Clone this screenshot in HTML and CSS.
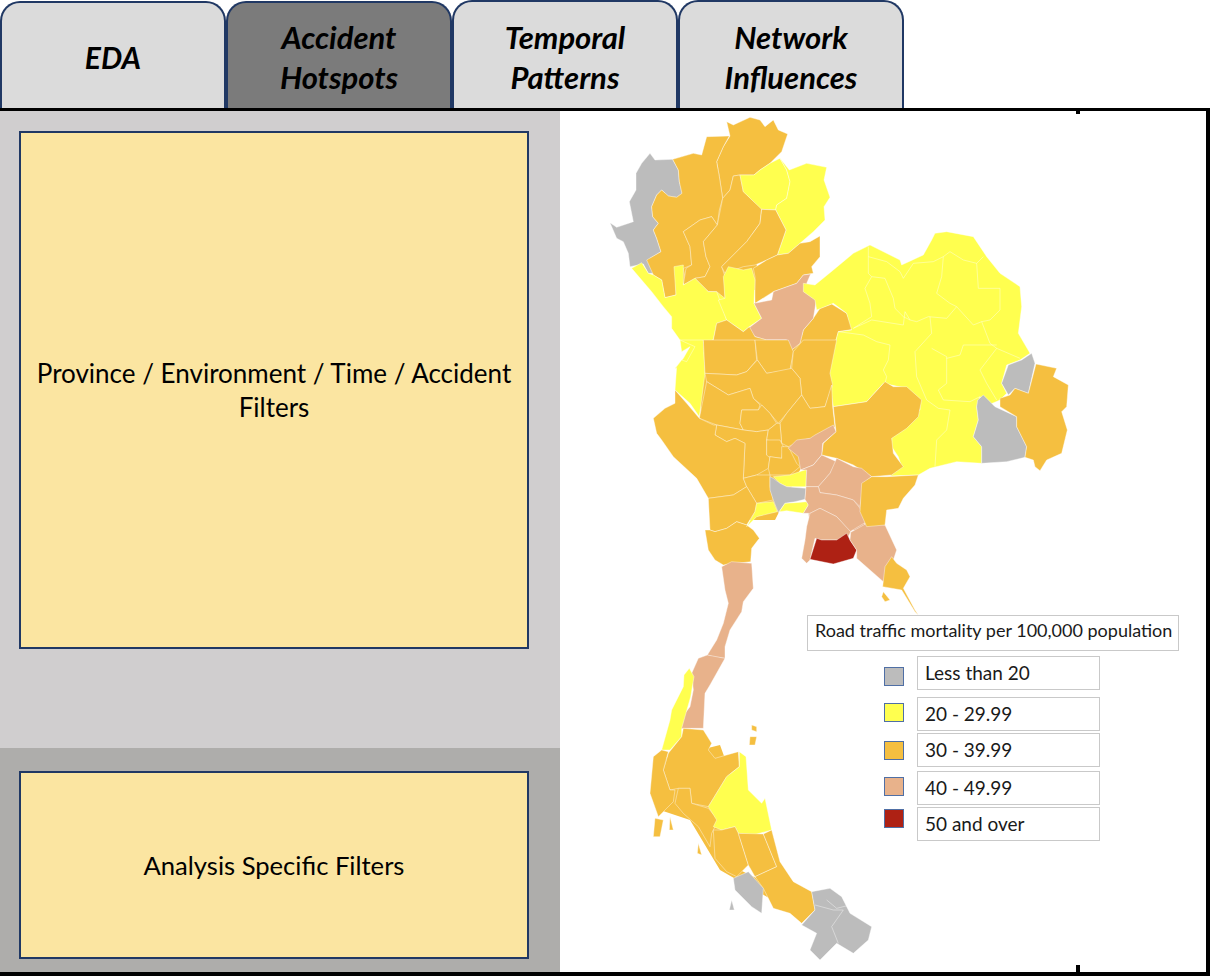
FILE: index.html
```html
<!DOCTYPE html>
<html lang="en">
<head>
  <meta charset="UTF-8" />
  <title>Accident Hotspots</title>
  <link rel="stylesheet" href="styles.css">
</head>
<body>

  <nav class="tabs">
    <div class="tab low eda">EDA</div>
    <div class="tab low active">Accident<br>Hotspots</div>
    <div class="tab">Temporal<br>Patterns</div>
    <div class="tab">Network<br>Influences</div>
  </nav>

  <main class="board">
    <section class="side">
      <div class="side-top">
        <div class="filter-box big">Province / Environment / Time / Accident Filters</div>
      </div>
      <div class="side-bottom">
        <div class="filter-box small">Analysis Specific Filters</div>
      </div>
    </section>

    <section class="map">
      <span class="tick tick-top"></span>
      <span class="tick tick-bottom"></span>

      <svg class="map-svg" width="646" height="861" viewBox="560 111 646 861">
        <!-- backing so no white shows between provinces -->
        <g class="backing">
          <polygon class="orange" points="665,190 740,160 748,200 760,290 690,290 665,250"/>
          <polygon class="yellow" points="680,300 740,285 745,320 700,335"/>
          <polygon class="orange" points="705,340 835,335 830,430 800,470 775,520 715,520 705,480 700,400"/>
          <polygon class="tan" points="805,470 860,470 865,530 810,530"/>
          <polygon class="orange" points="660,760 720,745 740,800 740,870 800,900 790,910 720,870 690,820 660,810"/>
        </g>

        <!-- north -->
        <g transform="translate(600 110) scale(.33333)">
          <polygon class="grey" points="150,130 165,150 218,148 235,180 238,215 246,250 230,262 205,258 185,240 170,255 155,290 158,320 175,340 160,360 170,385 183,425 150,445 160,490 145,490 130,462 90,470 85,430 70,395 50,385 30,338 50,352 100,335 88,275 108,240 108,190 125,160"/>
          <polygon class="orange" points="380,35 400,45 450,22 480,30 495,50 520,30 535,60 563,72 545,125 510,160 480,180 462,195 420,195 400,198 390,240 368,265 358,200 350,155 370,110 390,78"/>
          <polygon class="orange" points="218,148 280,130 305,135 320,80 388,78 370,110 350,155 358,200 368,265 358,300 352,345 335,320 300,330 250,365 270,410 275,465 250,475 258,520 228,520 228,555 195,563 185,510 160,495 140,450 183,425 170,385 160,360 175,340 158,320 155,290 170,255 185,240 205,258 230,262 246,250 238,215 235,180"/>
          <polygon class="orange" points="250,365 300,330 335,320 352,345 310,395 318,440 330,470 315,500 285,505 250,525 258,475 275,465 270,410"/>
          <polygon class="orange" points="400,198 420,195 430,245 485,295 480,340 440,395 365,470 375,500 375,565 350,545 325,545 285,505 315,500 330,470 318,440 310,395 352,345 368,265 390,240"/>
          <polygon class="yellow" points="420,195 462,195 480,180 510,160 540,145 560,180 570,215 560,265 530,285 527,300 485,298 430,245"/>
          <polygon class="yellow" points="540,145 568,180 620,160 680,172 672,210 690,262 672,290 675,330 640,365 600,400 565,430 532,435 558,360 527,300 530,285 560,265 570,215 560,180"/>
          <polygon class="orange" points="485,298 527,300 558,360 532,435 500,450 465,465 430,470 375,490 365,470 440,395 480,340"/>
          <polygon class="orange" points="660,378 660,440 635,470 640,490 610,495 590,520 520,545 465,580 465,500 460,475 500,450 532,435 565,430 600,400 630,395"/>
          <polygon class="yellow" points="95,475 125,458 145,490 160,495 185,510 195,563 228,555 222,470 250,465 250,525 285,505 325,545 350,545 370,600 380,630 350,640 340,690 305,700 310,780 225,775 250,745 270,710 245,725 240,690 215,655 215,620 190,590 155,545"/>
          <polygon class="yellow" points="385,470 430,480 455,475 465,510 462,580 485,625 448,650 430,665 380,630 355,570 375,565 370,500"/>
          <polygon class="orange" points="640,625 660,595 695,582 740,610 760,658 715,665 685,780 570,780 575,720 600,700 610,660"/>
          <polygon class="tan" points="610,495 632,492 620,520 650,565 640,625 610,660 600,700 575,720 560,690 500,690 465,680 445,655 485,625 462,580 515,570 520,545 590,520"/>
          <polygon class="orange" points="305,700 340,690 350,640 380,630 430,665 448,650 465,680 500,690 560,690 575,720 570,780 315,780"/>
        </g>

        <!-- north east -->
        <g transform="translate(800 220) scale(.33333)">
          <polygon class="yellow" points="10,190 45,195 100,150 160,100 210,75 300,120 305,135 370,105 395,60 405,40 440,35 520,50 560,110 600,160 660,200 665,260 655,340 690,400 660,420 620,435 605,490 620,520 600,540 565,555 540,530 530,560 535,600 520,650 545,680 545,730 470,725 390,745 355,765 270,768 305,740 295,710 275,680 275,650 300,630 330,595 360,570 360,540 320,505 250,490 200,545 100,560 88,480 85,440 115,335 155,330 140,280 100,250 50,270 45,240 10,215"/>
          <polyline class="line" points="205,80 205,160 215,170 195,205 210,250 215,290 160,325"/>
          <polyline class="line" points="205,110 260,125 300,155 310,175 340,130 400,125 430,110 450,95 490,120 530,130 550,110"/>
          <polyline class="line" points="215,170 255,175 280,235 285,265 310,290 330,300 350,305 385,290 440,295 470,260 520,315 545,305 570,370 590,385 540,450 560,490 590,540"/>
          <polyline class="line" points="430,110 425,170 410,220 450,250 470,260"/>
          <polyline class="line" points="530,130 535,205 600,205 600,270 570,300 545,305"/>
          <polyline class="line" points="160,325 215,300 310,315 315,275 330,300"/>
          <polyline class="line" points="115,335 190,345 230,365 270,375 265,420 250,450 260,470 255,490"/>
          <polyline class="line" points="390,290 395,340 345,395 350,470 380,540 415,565 450,570 440,630 410,660 405,740"/>
          <polyline class="line" points="395,385 440,410 440,490 415,510 430,540 510,545 540,530"/>
          <polyline class="line" points="440,415 480,405 490,375 590,375"/>
          <polyline class="line" points="590,385 660,415"/>
          <polygon class="grey" points="695,400 705,430 685,520 645,505 625,525 605,490 625,435 665,420"/>
          <polygon class="grey" points="550,525 585,560 650,590 650,620 680,680 675,712 620,725 545,730 545,680 520,650 535,600 530,560 533,540"/>
          <polygon class="orange" points="708,432 770,445 760,470 805,495 800,560 785,575 802,630 785,700 740,720 720,752 705,740 700,720 675,712 680,680 650,620 650,590 600,560 600,535 630,525 645,505 685,520"/>
        </g>

        <!-- centre and east coast -->
        <g transform="translate(640 340) scale(.33333)">
          <polygon class="yellow" points="120,0 190,0 195,100 178,230 150,190 105,150 110,80 125,60 140,65 165,20"/>
          <polygon class="orange" points="190,0 345,0 350,60 320,95 290,105 195,100"/>
          <polygon class="orange" points="345,0 445,0 460,35 450,90 380,100 352,60"/>
          <polygon class="orange" points="460,35 490,0 590,0 570,100 578,135 555,200 510,205 485,165 480,115 455,85"/>
          <polygon class="orange" points="195,100 290,105 320,95 352,60 380,100 455,85 480,115 485,165 440,220 415,250 390,220 365,195 340,175 330,145 265,165 200,125"/>
          <polygon class="orange" points="200,125 265,165 330,145 340,175 360,195 355,210 305,210 300,250 310,270 230,255 178,235"/>
          <polygon class="orange" points="305,210 355,210 365,195 390,220 410,250 385,270 350,275 310,270 300,250"/>
          <polygon class="orange" points="485,165 510,205 555,200 575,135 578,200 585,260 545,290 525,300 510,295 490,300 445,320 425,310 420,250 440,220"/>
          <polygon class="orange" points="230,255 310,270 350,275 385,270 380,300 380,345 390,350 385,385 350,405 310,415 315,310 285,295 260,305 225,285"/>
          <polygon class="orange" points="40,235 75,205 105,190 105,150 140,190 178,235 220,255 230,255 225,285 260,305 285,295 315,310 310,415 320,440 280,465 205,475 170,415 100,350 65,300 50,280"/>
          <polygon class="orange" points="385,270 410,250 420,250 425,310 380,300"/>
          <polygon class="orange" points="380,300 420,300 430,320 425,355 385,350 380,345"/>
          <polygon class="orange" points="425,320 445,320 470,370 480,380 450,405 390,405 385,385 390,350 425,355"/>
          <polygon class="orange" points="310,415 350,405 390,405 390,440 400,480 350,490 320,440"/>
          <polygon class="orange" points="205,475 280,465 320,440 350,490 345,515 320,555 290,545 260,565 225,575 210,570"/>
          <polygon class="orange" points="195,570 210,570 225,575 260,565 290,545 320,555 340,570 358,595 335,625 332,665 250,675 225,660 205,630"/>
          <polygon class="orange" points="580,200 680,185 735,125 760,140 800,140 845,180 835,230 800,265 755,295 760,340 790,380 755,405 695,410 640,375 590,355 545,345 550,310 588,275"/>
          <polygon class="tan" points="580,255 588,275 548,310 545,345 520,375 482,390 475,350 445,325 470,300 510,295 525,285"/>
          <polygon class="yellow" points="400,410 450,405 500,388 498,440 440,440 420,430"/>
          <polygon class="grey" points="390,410 400,415 420,430 440,440 498,445 495,478 465,485 435,490 415,518 400,480 390,450"/>
          <polygon class="yellow" points="320,560 345,515 350,490 400,485 412,515 350,530"/>
          <polygon class="yellow" points="418,515 435,490 465,488 500,485 505,495 490,520 440,512"/>
          <polygon class="tan" points="482,390 520,375 545,345 590,365 570,400 535,440 498,440 500,390"/>
          <polygon class="tan" points="590,355 640,380 665,385 695,410 670,430 660,500 640,480 590,465 540,458 535,440 570,400"/>
          <polygon class="tan" points="498,440 535,440 540,458 590,465 640,480 660,505 680,545 630,575 590,530 540,505 510,520 490,520 505,495 495,478"/>
          <polygon class="tan" points="510,520 540,505 590,530 632,575 620,600 545,600 525,595 510,660 500,670 485,655 495,600 500,560"/>
          <polygon class="red" points="530,595 545,600 590,600 620,580 630,600 650,630 640,655 580,672 510,658"/>
          <polygon class="tan" points="632,577 680,550 735,555 770,630 755,675 730,725 690,690 650,655 650,630 630,600"/>
          <polygon class="orange" points="755,650 770,670 800,690 810,710 790,745 825,810 835,825 825,815 785,750 728,740 735,680"/>
          <polygon class="orange" points="730,755 750,780 735,785 725,770"/>
          <polygon class="orange" points="665,430 695,410 740,410 835,405 825,435 790,475 775,505 740,510 735,555 680,560 660,515"/>
        </g>

        <!-- south -->
        <g transform="translate(620 560) scale(.33333)">
          <polygon class="tan" points="305,20 335,5 395,10 400,85 370,125 365,155 330,210 315,260 315,295 280,290 262,285 290,240 310,190 325,130 315,90"/>
          <polygon class="tan" points="262,285 315,295 270,375 255,400 250,505 190,505 175,510 168,495 210,440 220,390 215,340 235,295"/>
          <polygon class="yellow" points="208,325 222,350 212,410 185,505 185,530 150,570 125,570 150,480 155,450 190,380 192,345"/>
          <polygon class="orange" points="190,505 250,510 275,550 265,570 285,595 355,575 358,620 320,650 265,740 215,730 210,685 175,685 150,690 130,630 145,580 185,530"/>
          <polygon class="orange" points="125,570 145,575 130,630 150,690 165,690 160,725 115,770 90,700 100,590"/>
          <polygon class="orange" points="105,775 130,780 120,830 100,830"/>
          <polygon class="orange" points="175,685 210,685 215,730 265,745 295,780 275,820 270,860 235,800 190,760 165,730"/>
          <polygon class="yellow" points="358,575 378,590 385,690 425,730 435,715 455,810 400,825 355,820 345,800 305,810 280,800 290,780 265,740 320,650 358,620"/>
          <polygon class="orange" points="280,810 305,810 345,800 355,820 385,915 350,950 320,935 285,895"/>
          <polygon class="orange" points="355,820 430,822 470,920 405,950 385,915"/>
          <polygon class="orange" points="430,822 455,810 480,905 520,965 575,995 585,1050 545,1090 510,1060 460,1045 430,985 405,950 470,920"/>
          <polygon class="grey" points="340,955 385,935 430,985 425,1060 395,1040 345,990"/>
          <polygon class="grey" points="575,995 630,985 665,1010 690,1060 755,1100 745,1140 700,1180 650,1150 600,1200 570,1170 590,1120 545,1095 585,1050"/>
          <polyline class="line" points="620,1020 650,1045 690,1035"/>
          <polyline class="line" points="585,1035 640,1050 670,1050 635,1100 655,1150"/>
          <polygon class="orange" points="395,495 410,500 410,515 395,510"/>
          <polygon class="orange" points="390,530 410,530 405,555 388,555"/>
          <polygon class="orange" points="235,850 245,885 232,880"/>
          <polygon class="orange" points="150,770 160,810 148,810"/>
          <polygon class="grey" points="335,1020 343,1050 328,1050"/>
        </g>
      </svg>

      <div class="legend">
        <div class="legend-title">Road traffic mortality per 100,000 population</div>
        <div class="legend-row r1"><span class="swatch s-grey"></span><span class="legend-label">Less than 20</span></div>
        <div class="legend-row r2"><span class="swatch s-yellow"></span><span class="legend-label">20 - 29.99</span></div>
        <div class="legend-row r3"><span class="swatch s-orange"></span><span class="legend-label">30 - 39.99</span></div>
        <div class="legend-row r4"><span class="swatch s-tan"></span><span class="legend-label">40 - 49.99</span></div>
        <div class="legend-row r5"><span class="swatch s-red"></span><span class="legend-label">50 and over</span></div>
      </div>
    </section>
  </main>

</body>
</html>
```

FILE: styles.css
```css
* {
  box-sizing: border-box;
}
body {
  margin: 0;
  width: 1210px;
  height: 980px;
  background: #ffffff;
  font-family: Lato, "Open Sans", sans-serif;
  color: #000000;
  overflow: hidden;
}
.tabs {
  display: flex;
  height: 108px;
  align-items: flex-end;
}
.tab {
  width: 226px;
  height: 108px;
  padding-top: 3px;
  display: flex;
  align-items: center;
  justify-content: center;
  text-align: center;
  background: #dbdbdb;
  border: 2px solid #203864;
  border-bottom: none;
  border-radius: 20px 20px 0 0;
  font-size: 31px;
  font-weight: 700;
  font-style: italic;
  line-height: 40px;
}
.tab.low {
  height: 107px;
}
.tab.eda {
  font-size: 30px;
}
.tab.active {
  background: #7b7b7b;
}
.board {
  display: flex;
  width: 1210px;
  height: 868px;
  border-top: 3px solid #000000;
  border-right: 4px solid #000000;
  border-bottom: 4px solid #000000;
}
.side {
  width: 560px;
  display: flex;
  flex-direction: column;
}
.side-top {
  height: 637px;
  padding: 20px 31px 0 19px;
  background: #d0cecf;
}
.side-bottom {
  height: 224px;
  padding: 23px 31px 0 19px;
  background: #aeadab;
}
.filter-box {
  display: flex;
  align-items: center;
  justify-content: center;
  text-align: center;
  padding: 0 10px;
  background: #fbe5a1;
  border: 2px solid #203864;
  font-size: 26px;
  line-height: 34px;
}
.filter-box.big {
  height: 518px;
}
.filter-box.small {
  height: 188px;
  font-size: 25.6px;
}
.map {
  position: relative;
  width: 646px;
  background: #ffffff;
}
.map-svg {
  display: block;
}
.map-svg polygon {
  stroke: #ffffff;
  stroke-opacity: 0.4;
  stroke-width: 1;
  vector-effect: non-scaling-stroke;
}
.map-svg .backing polygon {
  stroke: none;
}
.map-svg .line {
  fill: none;
  stroke: #ffffff;
  stroke-opacity: 0.4;
  stroke-width: 1;
  vector-effect: non-scaling-stroke;
}
.grey { fill: #bcbcbc; }
.yellow { fill: #ffff4f; }
.orange { fill: #f5bf40; }
.tan { fill: #e8b28b; }
.red { fill: #ae2114; }
.tick {
  position: absolute;
  left: 516px;
  width: 4px;
  background: #000000;
}
.tick-top {
  top: 0;
  height: 3px;
}
.tick-bottom {
  bottom: 0;
  height: 7px;
}
.legend {
  position: absolute;
  left: 247px;
  top: 504px;
  width: 372px;
}
.legend-title {
  height: 36px;
  padding-left: 7px;
  background: #ffffff;
  border: 1px solid #c9c9c9;
  font-size: 18px;
  line-height: 28px;
  color: #1a1a1a;
}
.legend-row {
  display: flex;
  margin-left: 77px;
}
.legend-label {
  width: 183px;
  height: 34px;
  margin-left: 13px;
  padding-left: 7px;
  background: #ffffff;
  border: 1px solid #c9c9c9;
  font-size: 19px;
  line-height: 32px;
  color: #1a1a1a;
}
.swatch {
  width: 20px;
  height: 19px;
  border: 1px solid #4f6fa5;
}
.s-grey { background: #bcbcbc; }
.s-yellow { background: #ffff4f; }
.s-orange { background: #f5bf40; }
.s-tan { background: #e8b28b; }
.s-red { background: #ae2114; }
.r1 { margin-top: 5px; }
.r2 { margin-top: 7px; }
.r3 { margin-top: 2px; }
.r4 { margin-top: 4px; }
.r5 { margin-top: 2px; }
.r1 .swatch { margin-top: 11px; }
.r2 .swatch { margin-top: 6px; }
.r3 .swatch { margin-top: 8px; }
.r4 .swatch { margin-top: 6px; }
.r5 .swatch { margin-top: 2px; }
```
